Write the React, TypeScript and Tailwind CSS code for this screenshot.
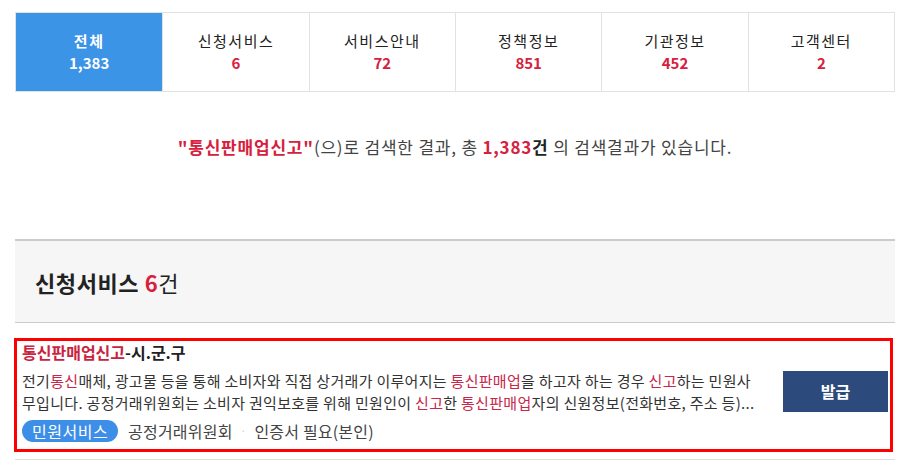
import React from 'react';

const TABS = [
  { label: '전체', count: '1,383', active: true },
  { label: '신청서비스', count: '6' },
  { label: '서비스안내', count: '72' },
  { label: '정책정보', count: '851' },
  { label: '기관정보', count: '452' },
  { label: '고객센터', count: '2' },
];

const Hl = ({ children }: { children: React.ReactNode }) => (
  <span className="text-[#c8264a]">{children}</span>
);

export default function App() {
  return (
    <div
      className="w-[904px] h-[475px] bg-white overflow-hidden pl-[15px] pr-[9px] pt-[12px] text-[#333]"
      style={{ fontFamily: '"Noto Sans CJK KR", "Noto Sans", sans-serif' }}
    >
      {/* Tabs */}
      <div className="grid grid-cols-6 border border-[#e2e2e2] h-[80px]">
        {TABS.map((t, i) => (
          <div
            key={t.label}
            className={`flex flex-col items-center justify-center gap-[0px] ${i > 0 ? 'border-l border-[#e2e2e2]' : ''} ${
              t.active ? 'bg-[#3c94e7] text-white' : 'bg-white text-[#222]'
            }`}
          >
            <span className={`text-[15px] leading-[22px] tracking-[1.5px] ${t.active ? 'font-bold' : ''}`}>{t.label}</span>
            <span className={`text-[15px] leading-[22px] font-bold ${t.active ? 'text-white' : 'text-[#d6203e]'}`}>
              {t.count}
            </span>
          </div>
        ))}
      </div>

      {/* Result summary */}
      <p className="mt-[43px] text-center text-[17px] leading-[24px] tracking-[0.8px] text-[#444]">
        <span className="font-bold text-[#d6203e]">"통신판매업신고"</span>(으)로 검색한 결과, 총{' '}
        <span className="font-bold text-[#d6203e]">1,383</span>
        <span className="font-bold text-[#222]">건</span> 의 검색결과가 있습니다.
      </p>

      {/* Section header */}
      <div className="mt-[80px] border-t-2 border-b border-[#cccccc] bg-[#f6f6f6] h-[84px] flex items-center pl-[20px]">
        <h2 className="text-[22px] leading-[28px] tracking-[0.6px] text-[#222]">
          <span className="font-bold">신청서비스</span>{' '}
          <span className="font-bold text-[#d6203e]">6</span>건
        </h2>
      </div>

      {/* Result item */}
      <div className="mt-[15px] -ml-px mr-[2px] border-[3px] border-[#ff0000] h-[114px] flex pl-[5px] pr-[2px]">
        <div className="flex-1 min-w-0 pt-[1px]">
          <h3 className="text-[16px] leading-[20px] font-semibold text-[#222]">
            <span className="text-[#c8233f]">통신판매업신고</span>-시.군.구
          </h3>
          <div className="mt-[8px] text-[15px] leading-[22px] tracking-[0.3px] text-[#333] whitespace-nowrap">
            <div>
              전기<Hl>통신</Hl>매체, 광고물 등을 통해 소비자와 직접 상거래가 이루어지는 <Hl>통신판매업</Hl>을 하고자 하는 경우{' '}
              <Hl>신고</Hl>하는 민원사
            </div>
            <div>
              무입니다. 공정거래위원회는 소비자 권익보호를 위해 민원인이 <Hl>신고</Hl>한 <Hl>통신판매업</Hl>자의
              신원정보(전화번호, 주소 등)...
            </div>
          </div>
          <div className="mt-[6px] flex items-center text-[16px] leading-[22px] tracking-[0.2px] text-[#444]">
            <span className="bg-[#3d8ee6] text-white rounded-full px-[10px] h-[22px] flex items-center tracking-[0.5px]">
              민원서비스
            </span>
            <span className="ml-[10px]">공정거래위원회</span>
            <span className="mx-[8px] text-[#ccc] text-[10px]">·</span>
            <span>인증서 필요(본인)</span>
          </div>
        </div>
        <button className="self-center mb-[8px] w-[105px] h-[41px] bg-[#2c4a7c] text-white text-[16px] font-bold">
          발급
        </button>
      </div>

      <div className="mt-[7px] border-t border-[#dddddd]" />
    </div>
  );
}
